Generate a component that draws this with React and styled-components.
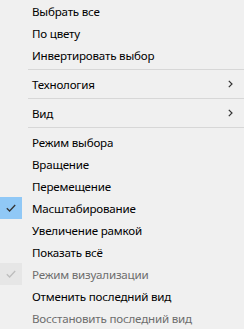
import React from "react";
import styled, { createGlobalStyle } from "styled-components";

const GlobalStyle = createGlobalStyle`
  html, body {
    margin: 0;
    padding: 0;
    background: #f0f0f0;
  }
`;

const groups = [
  [
    { label: "Выбрать все" },
    { label: "По цвету" },
    { label: "Инвертировать выбор" },
  ],
  [{ label: "Технология", submenu: true }],
  [{ label: "Вид", submenu: true }],
  [
    { label: "Режим выбора" },
    { label: "Вращение" },
    { label: "Перемещение" },
    { label: "Масштабирование", checked: true },
    { label: "Увеличение рамкой" },
    { label: "Показать всё" },
    { label: "Режим визуализации", checked: true, disabled: true },
    { label: "Отменить последний вид" },
    { label: "Восстановить последний вид", disabled: true },
  ],
];

function Check({ disabled }) {
  return (
    <svg width="10" height="8" viewBox="0 0 10 8">
      <path
        d="M0.8 4.2 L3.6 7 L9.2 1"
        fill="none"
        stroke={disabled ? "#bdbdbd" : "#333333"}
        strokeWidth="1.3"
      />
    </svg>
  );
}

function Chevron() {
  return (
    <svg width="5" height="8" viewBox="0 0 5 8">
      <path d="M0.8 0.8 L4 4 L0.8 7.2" fill="none" stroke="#333" strokeWidth="1.2" />
    </svg>
  );
}

function App() {
  return (
    <>
      <GlobalStyle />
      <Menu>
        {groups.map((group, gi) => (
          <React.Fragment key={gi}>
            {gi > 0 && <Separator />}
            {group.map((item) => (
              <Item key={item.label} disabled={item.disabled}>
                <CheckBox $checked={item.checked} $disabled={item.disabled}>
                  {item.checked && <Check disabled={item.disabled} />}
                </CheckBox>
                <Label>{item.label}</Label>
                <Arrow>{item.submenu && <Chevron />}</Arrow>
              </Item>
            ))}
          </React.Fragment>
        ))}
      </Menu>
    </>
  );
}

export default App;

const Menu = styled.div`
  width: 244px;
  height: 329px;
  background: #f0f0f0;
  display: flex;
  flex-direction: column;
  font-family: "Noto Sans", "Open Sans", sans-serif;
  font-size: 11.6px;
  letter-spacing: -0.2px;
  overflow: hidden;
`;

const Item = styled.div`
  display: flex;
  align-items: center;
  height: 22px;
  color: ${(props) => (props.disabled ? "#6d6d6d" : "#000")};
`;

const CheckBox = styled.div`
  width: 22px;
  height: 22px;
  display: flex;
  align-items: center;
  justify-content: center;
  background: ${(props) =>
    props.$checked ? (props.$disabled ? "#e6e6e6" : "#90c8f6") : "transparent"};
  margin-right: 10px;
`;

const Label = styled.span`
  flex: 1;
  white-space: nowrap;
`;

const Arrow = styled.div`
  width: 14px;
  margin-right: 11px;
  display: flex;
  align-items: center;
  justify-content: flex-end;
`;

const Separator = styled.div`
  height: 7px;
  display: flex;
  align-items: center;
  padding-left: 28px;
  &::after {
    content: "";
    flex: 1;
    height: 1px;
    background: #d7d7d7;
  }
`;
